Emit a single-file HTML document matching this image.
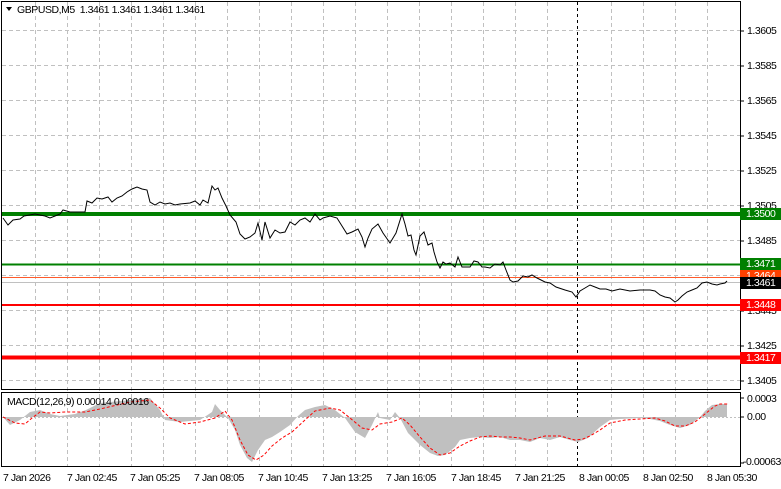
<!DOCTYPE html>
<html><head><meta charset="utf-8"><style>
body{margin:0;width:781px;height:489px;background:#fff;overflow:hidden;font-family:"Liberation Sans",sans-serif;font-size:10.5px;letter-spacing:-0.45px;color:#000;position:relative}
.t{position:absolute;white-space:nowrap}
.pl{position:absolute;left:747px;white-space:nowrap}
.bx{position:absolute;left:740px;width:41px;height:12px;color:#fff;padding-left:6px;box-sizing:border-box;line-height:12px}
</style></head><body>
<svg width="781" height="489" style="position:absolute;left:0;top:0">
<g stroke="#c0c0c0" stroke-dasharray="4,3" stroke-width="1">
<line x1="35.5" y1="2" x2="35.5" y2="467"/><line x1="67.5" y1="2" x2="67.5" y2="467"/><line x1="99.5" y1="2" x2="99.5" y2="467"/><line x1="131.5" y1="2" x2="131.5" y2="467"/><line x1="163.5" y1="2" x2="163.5" y2="467"/><line x1="195.5" y1="2" x2="195.5" y2="467"/><line x1="227.5" y1="2" x2="227.5" y2="467"/><line x1="259.5" y1="2" x2="259.5" y2="467"/><line x1="291.5" y1="2" x2="291.5" y2="467"/><line x1="323.5" y1="2" x2="323.5" y2="467"/><line x1="355.5" y1="2" x2="355.5" y2="467"/><line x1="387.5" y1="2" x2="387.5" y2="467"/><line x1="419.5" y1="2" x2="419.5" y2="467"/><line x1="451.5" y1="2" x2="451.5" y2="467"/><line x1="483.5" y1="2" x2="483.5" y2="467"/><line x1="515.5" y1="2" x2="515.5" y2="467"/><line x1="547.5" y1="2" x2="547.5" y2="467"/><line x1="611.5" y1="2" x2="611.5" y2="467"/><line x1="643.5" y1="2" x2="643.5" y2="467"/><line x1="675.5" y1="2" x2="675.5" y2="467"/><line x1="707.5" y1="2" x2="707.5" y2="467"/>
<line x1="2" y1="30.5" x2="740" y2="30.5"/><line x1="2" y1="65.5" x2="740" y2="65.5"/><line x1="2" y1="100.5" x2="740" y2="100.5"/><line x1="2" y1="135.5" x2="740" y2="135.5"/><line x1="2" y1="170.5" x2="740" y2="170.5"/><line x1="2" y1="205.5" x2="740" y2="205.5"/><line x1="2" y1="240.5" x2="740" y2="240.5"/><line x1="2" y1="275.5" x2="740" y2="275.5"/><line x1="2" y1="310.5" x2="740" y2="310.5"/><line x1="2" y1="345.5" x2="740" y2="345.5"/><line x1="2" y1="380.5" x2="740" y2="380.5"/>
</g>
<line x1="577.5" y1="2" x2="577.5" y2="467" stroke="#000" stroke-dasharray="3,3"/>
<polygon fill="#c0c0c0" points="3,417 10,425 20,420 30,412 40,410 50,414 60,416 75,414 86,410 90,408 100,403 130,400 150,398 160,410 165,420 180,422 200,420 212,412 215,404 220,410 228,418 235,430 240,445 247,458 252,462 258,450 265,440 272,437 280,432 290,425 298,416 305,410 315,407 325,405 335,410 345,418 355,432 365,438 372,425 378,412 380,418 390,420 395,412 400,418 408,433 420,445 430,453 438,456 445,455 455,447 460,440 470,438 480,437 490,438 500,437 510,440 520,440 530,442 540,438 550,440 560,437 570,440 578,442 588,438 600,427 610,420 620,419 640,418 650,419 660,421 670,425 680,428 690,425 700,417 705,411 712,405 720,404 727,404 727,417"/>
<line x1="2" y1="417.5" x2="740" y2="417.5" stroke="#c0c0c0" stroke-dasharray="2,2"/>
<polyline fill="none" stroke="#f00" stroke-dasharray="3,2" points="3,417 15,423 25,424 32,418 40,412 50,413 65,412 85,412 100,409 130,402 150,400 160,408 170,418 185,424 200,422 215,418 225,411 232,420 240,440 248,455 256,460 264,455 272,446 282,438 292,432 305,420 315,411 330,408 340,410 350,418 362,428 372,430 380,424 392,422 402,418 410,425 420,437 430,448 440,455 450,453 460,446 470,441 480,437 490,436 500,437 510,437 520,438 530,440 545,436 560,436 575,440 583,439 590,436 600,430 610,423 625,420 640,419 655,418 665,421 675,426 685,426 695,422 705,414 715,406 720,404 728,404"/>
<line x1="2" y1="214" x2="740" y2="214" stroke="#008000" stroke-width="4"/>
<line x1="2" y1="264.5" x2="740" y2="264.5" stroke="#008000" stroke-width="2"/>
<line x1="2" y1="277.5" x2="740" y2="277.5" stroke="#ff5a2a" stroke-width="1"/>
<line x1="2" y1="282.5" x2="740" y2="282.5" stroke="#c0c0c0" stroke-width="1"/>
<line x1="2" y1="305" x2="740" y2="305" stroke="#f00" stroke-width="2"/>
<line x1="2" y1="357.5" x2="740" y2="357.5" stroke="#f00" stroke-width="4"/>
<polyline fill="none" stroke="#000" stroke-width="1" points="3,218 8,225 13,220 20,219 24,216 35,214 45,216 50,218 55,216 60,214 63,210 70,212 85,212 87,201 92,203 97,198 102,199 108,197 112,202 117,198 122,196 127,192 132,189 137,187 142,189 147,190 150,202 155,205 160,202 165,204 170,203 175,205 180,204 190,203 195,201 200,205 203,200 208,203 212,186 215,190 218,188 222,198 226,206 230,215 236,222 240,234 245,239 250,237 255,233 258,223 262,240 265,222 270,238 275,230 280,233 285,232 290,222 295,225 300,220 305,218 310,222 315,214 320,220 323,218 330,216 337,218 342,226 347,234 352,232 358,229 362,237 365,247 368,238 372,229 378,224 383,233 390,243 396,233 402,214 405,224 408,236 411,235 414,250 416,255 420,236 424,232 428,245 432,243 434,252 437,262 440,268 443,262 446,264 450,263 455,267 458,257 462,267 470,267 474,261 478,262 482,267 485,267 490,268 495,264 500,265 503,262 506,270 510,280 513,282 518,281 523,276 528,277 532,275 537,278 545,282 550,283 556,287 565,290 572,292 576,297 580,291 585,288 590,285 595,287 600,289 606,289 612,291 620,289 630,291 640,290 650,290 655,291 660,295 665,297 670,298 675,302 678,300 682,296 687,292 692,290 697,288 702,283 707,282 712,284 717,285 720,284 725,283 727,281"/>
<rect x="1.5" y="1.5" width="739" height="388" fill="none" stroke="#000"/>
<rect x="1.5" y="392.5" width="739" height="74" fill="none" stroke="#000"/>
<g stroke="#000"><line x1="740" y1="31" x2="744" y2="31"/><line x1="740" y1="66" x2="744" y2="66"/><line x1="740" y1="101" x2="744" y2="101"/><line x1="740" y1="136" x2="744" y2="136"/><line x1="740" y1="171" x2="744" y2="171"/><line x1="740" y1="206" x2="744" y2="206"/><line x1="740" y1="241" x2="744" y2="241"/><line x1="740" y1="311" x2="744" y2="311"/><line x1="740" y1="346" x2="744" y2="346"/><line x1="740" y1="381" x2="744" y2="381"/><line x1="740" y1="398" x2="744" y2="398"/><line x1="740" y1="417" x2="744" y2="417"/><line x1="740" y1="463" x2="744" y2="463"/></g>
<polygon points="6,7 12,7 9,11" fill="#000"/>
</svg>
<div class="t" style="left:17px;top:4px">GBPUSD,M5&nbsp; 1.3461 1.3461 1.3461 1.3461</div>
<div class="t" style="left:7px;top:396px">MACD(12,26,9) 0.00014 0.00016</div>
<div class="pl" style="top:25px">1.3605</div><div class="pl" style="top:60px">1.3585</div><div class="pl" style="top:95px">1.3565</div><div class="pl" style="top:130px">1.3545</div><div class="pl" style="top:165px">1.3525</div><div class="pl" style="top:200px">1.3505</div><div class="pl" style="top:235px">1.3485</div><div class="pl" style="top:305px">1.3445</div><div class="pl" style="top:340px">1.3425</div><div class="pl" style="top:375px">1.3405</div>
<div class="bx" style="top:208px;background:#008000">1.3500</div>
<div class="bx" style="top:258px;background:#008000">1.3471</div>
<div class="bx" style="top:270px;background:#ff4000">1.3464</div>
<div class="bx" style="top:277px;background:#000">1.3461</div>
<div class="bx" style="top:299px;background:#f00">1.3448</div>
<div class="bx" style="top:352px;background:#f00">1.3417</div>
<div class="pl" style="top:393px">0.0003</div><div class="pl" style="top:411px">0.00</div><div class="t" style="left:743px;top:456px">-0.00063</div>
<div class="t" style="left:3px;top:472px">7 Jan 2026</div><div class="t" style="left:67px;top:472px">7 Jan 02:45</div><div class="t" style="left:130px;top:472px">7 Jan 05:25</div><div class="t" style="left:194px;top:472px">7 Jan 08:05</div><div class="t" style="left:258px;top:472px">7 Jan 10:45</div><div class="t" style="left:322px;top:472px">7 Jan 13:25</div><div class="t" style="left:386px;top:472px">7 Jan 16:05</div><div class="t" style="left:451px;top:472px">7 Jan 18:45</div><div class="t" style="left:515px;top:472px">7 Jan 21:25</div><div class="t" style="left:579px;top:472px">8 Jan 00:05</div><div class="t" style="left:643px;top:472px">8 Jan 02:50</div><div class="t" style="left:707px;top:472px">8 Jan 05:30</div>
</body></html>
